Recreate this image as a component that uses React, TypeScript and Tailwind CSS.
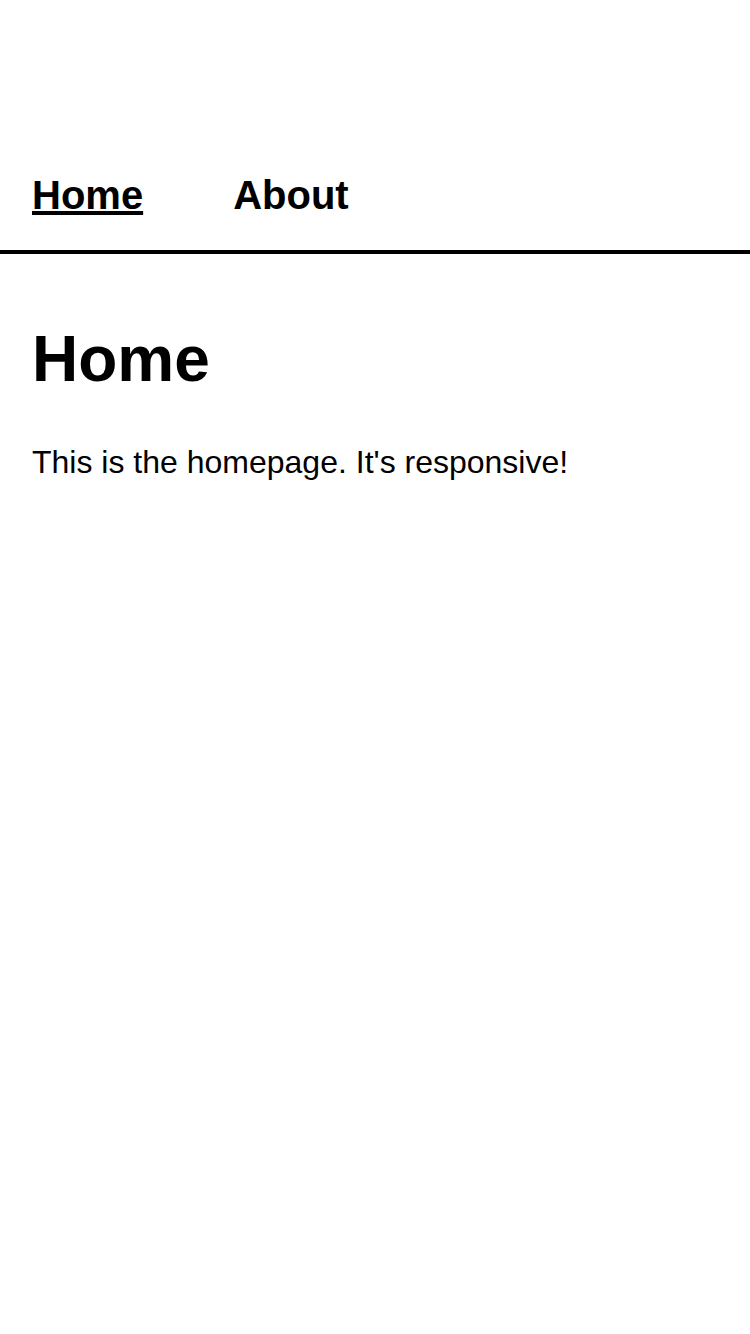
import React from "react";

const App: React.FC = () => {
  return (
    <div className="min-h-screen bg-white text-black font-['Liberation_Sans',Arial,sans-serif]">
      <nav className="flex gap-[90px] px-8 pt-[175px] pb-[35px] border-b-4 border-black">
        <a href="#" className="text-[40px] leading-none font-bold underline">
          Home
        </a>
        <a href="#" className="text-[40px] leading-none font-bold">
          About
        </a>
      </nav>
      <main className="px-8">
        <h1 className="mt-[73px] text-[64px] leading-none font-bold">Home</h1>
        <p className="mt-[55px] text-[32px] leading-none">
          This is the homepage. It's responsive!
        </p>
      </main>
    </div>
  );
};

export default App;
